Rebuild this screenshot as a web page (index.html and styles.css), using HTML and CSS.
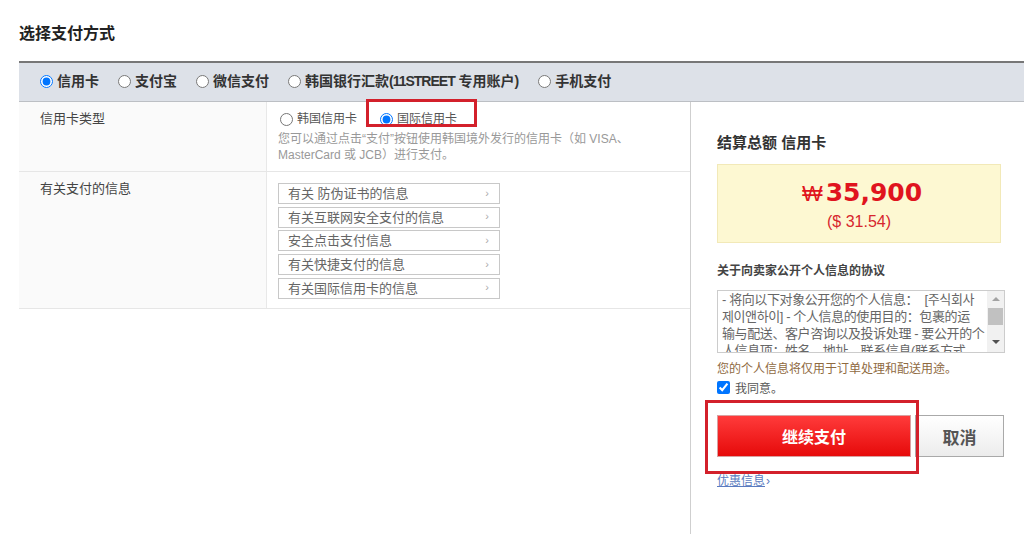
FILE: index.html
```html
<!DOCTYPE html>
<html lang="zh">
<head>
<meta charset="utf-8">
<title>选择支付方式</title>
<link rel="stylesheet" href="styles.css">
</head>
<body>
<div class="page">
  <h2 class="title">选择支付方式</h2>
  <div class="nav">
    <label class="nav-item"><input type="radio" name="pay" checked><span>信用卡</span></label>
    <label class="nav-item"><input type="radio" name="pay"><span>支付宝</span></label>
    <label class="nav-item"><input type="radio" name="pay"><span>微信支付</span></label>
    <label class="nav-item"><input type="radio" name="pay"><span>韩国银行汇款<span class="latin">(11STREET</span> 专用账户)</span></label>
    <label class="nav-item"><input type="radio" name="pay"><span>手机支付</span></label>
  </div>
  <div class="main">
    <div class="left">
      <div class="row row-type">
        <div class="label">信用卡类型</div>
        <div class="cell">
          <div class="opts">
            <label class="opt"><input type="radio" name="card"><span>韩国信用卡</span></label>
            <label class="opt opt-hl"><input type="radio" name="card" checked><span>国际信用卡</span><span class="hl-box"></span></label>
          </div>
          <p class="desc">您可以通过点击“支付”按钮使用韩国境外发行的信用卡（如 VISA、<br>MasterCard 或 JCB）进行支付。</p>
        </div>
      </div>
      <div class="row row-info">
        <div class="label">有关支付的信息</div>
        <div class="cell">
          <ul class="links">
            <li class="link"><span>有关 防伪证书的信息</span><span class="chev">›</span></li>
            <li class="link"><span>有关互联网安全支付的信息</span><span class="chev">›</span></li>
            <li class="link"><span>安全点击支付信息</span><span class="chev">›</span></li>
            <li class="link"><span>有关快捷支付的信息</span><span class="chev">›</span></li>
            <li class="link"><span>有关国际信用卡的信息</span><span class="chev">›</span></li>
          </ul>
        </div>
      </div>
    </div>
    <div class="right">
      <div class="panel">
        <h3 class="sum-title">结算总额 信用卡</h3>
        <div class="price-box">
          <div class="price"><span class="won">₩</span>35,900</div>
          <div class="usd">($ 31.54)</div>
        </div>
        <h4 class="agree-title">关于向卖家公开个人信息的协议</h4>
        <div class="terms">
          <div class="terms-text">
            <span class="tl">- 将向以下对象公开您的个人信息：&nbsp; [주식회사</span>
            <span class="tl">제이앤하이] - 个人信息的使用目的：包裹的运</span>
            <span class="tl">输与配送、客户咨询以及投诉处理 - 要公开的个</span>
            <span class="tl">人信息项：姓名、地址、联系信息(联系方式、</span>
          </div>
          <div class="sbar">
            <span class="arr up"></span>
            <span class="thumb"></span>
            <span class="arr down"></span>
          </div>
        </div>
        <p class="notice">您的个人信息将仅用于订单处理和配送用途。</p>
        <label class="agree"><input type="checkbox" checked><span>我同意。</span></label>
        <div class="btns">
          <button class="btn-pay" type="button">继续支付</button>
          <button class="btn-cancel" type="button">取消</button>
          <span class="btn-hl"></span>
        </div>
        <a class="promo" href="#">优惠信息<span class="promo-chev">›</span></a>
      </div>
    </div>
  </div>
</div>
</body>
</html>
```
FILE: styles.css
```css
* { box-sizing: border-box; }
html, body { margin: 0; padding: 0; background: #fff; }
body {
  font-family: "Liberation Sans", "Noto Sans CJK SC", "Noto Sans CJK KR", sans-serif;
  color: #333;
  width: 1024px;
  height: 534px;
  overflow: hidden;
}
.page { padding-left: 19px; }
.title {
  margin: 0;
  padding-top: 23px;
  height: 61px;
  font-size: 16px;
  line-height: 22px;
  font-weight: bold;
  color: #222;
}
.nav {
  display: flex;
  align-items: center;
  gap: 19px;
  height: 41px;
  padding-left: 21px;
  padding-bottom: 2px;
  background: #dde1e8;
  border-top: 2px solid #777;
  border-bottom: 1px solid #bcbfc4;
}
.nav-item {
  display: flex;
  align-items: center;
  gap: 4px;
  font-size: 14px;
  font-weight: bold;
  color: #333;
  line-height: 20px;
}
.latin { letter-spacing: -1px; }
input[type="radio"], input[type="checkbox"] {
  margin: 0;
  width: 13px;
  height: 13px;
}
.main {
  display: flex;
  height: 432px;
}
.left {
  width: 672px;
  border-right: 1px solid #cfcfcf;
}
.row {
  display: flex;
  border-bottom: 1px solid #e6e6e6;
}
.row-type { height: 70px; }
.row-info { height: 137px; }
.label {
  width: 248px;
  background: #fafafa;
  padding: 9px 21px;
  font-size: 13px;
  line-height: 16px;
  color: #444;
  border-right: 1px solid #e8e8e8;
}
.cell {
  flex: 1;
  padding: 9px 0 0 11px;
  background: #fff;
}
.opts {
  display: flex;
  align-items: center;
  gap: 23px;
  height: 16px;
  padding-left: 2px;
}
.opt {
  display: flex;
  align-items: center;
  gap: 4px;
  font-size: 12px;
  line-height: 16px;
  color: #555;
}
.opt-hl { position: relative; }
.hl-box {
  position: absolute;
  left: -14px;
  top: -12px;
  width: 111px;
  height: 28px;
  border: 3px solid #d3202b;
}
.desc {
  margin: 4px 0 0;
  font-size: 12px;
  line-height: 16px;
  color: #999;
}
.links {
  list-style: none;
  margin: 0;
  padding: 2px 0 0;
  display: flex;
  flex-direction: column;
  gap: 2.7px;
}
.link {
  width: 222px;
  height: 21px;
  border: 1px solid #c8c8c8;
  display: flex;
  align-items: center;
  justify-content: space-between;
  padding: 0 10px 2px 9px;
  font-size: 13px;
  color: #666;
  background: #fff;
}
.chev { font-size: 11px; color: #aaa; }
.right { flex: 1; }
.panel {
  width: 288px;
  margin-left: 26px;
  padding-top: 31px;
}
.sum-title {
  margin: 0;
  font-size: 15px;
  line-height: 20px;
  font-weight: bold;
  color: #333;
}
.price-box {
  margin-top: 11px;
  width: 284px;
  height: 79px;
  background: #fdf8d2;
  border: 1px solid #f2e9b8;
  padding-top: 11px;
  text-align: center;
  color: #e0141e;
}
.price {
  font-family: "DejaVu Sans", "Liberation Sans", sans-serif;
  font-size: 25px;
  line-height: 34px;
  font-weight: bold;
  padding-left: 6px;
}
.won {
  font-family: "Liberation Sans", sans-serif;
  font-weight: normal;
  font-size: 22px;
  margin-right: 3px;
}
.usd {
  font-size: 16px;
  line-height: 22px;
  color: #d7262e;
}
.agree-title {
  margin: 19px 0 0;
  font-size: 12px;
  line-height: 18px;
  font-weight: bold;
  color: #444;
}
.terms {
  margin-top: 10px;
  height: 63px;
  border: 1px solid #ccc;
  display: flex;
  overflow: hidden;
}
.terms-text {
  flex: 1;
  padding: 0 0 0 4px;
  font-size: 13px;
  letter-spacing: -0.4px;
  line-height: 17px;
  color: #666;
  overflow: hidden;
}
.tl { display: block; white-space: nowrap; }
.sbar {
  width: 17px;
  background: #f1f1f1;
  display: flex;
  flex-direction: column;
  align-items: center;
}
.arr {
  width: 0;
  height: 0;
  border-left: 4px solid transparent;
  border-right: 4px solid transparent;
}
.arr.up { border-bottom: 4px solid #a3a3a3; margin-top: 6px; }
.thumb {
  width: 15px;
  height: 17px;
  background: #c1c1c1;
  margin-top: 7px;
}
.arr.down { border-top: 4px solid #505050; margin-top: 15px; }
.notice {
  margin: 7px 0 0;
  font-size: 12px;
  line-height: 18px;
  color: #8f6a3f;
}
.agree {
  display: flex;
  align-items: center;
  gap: 5px;
  height: 18px;
  font-size: 12px;
  color: #555;
}
.btns {
  position: relative;
  display: flex;
  gap: 4px;
  margin-top: 19px;
  height: 42px;
}
.btn-pay {
  width: 194px;
  height: 42px;
  border: 1px solid #d9a0a0;
  background: linear-gradient(#ff3b3b, #e60a0a);
  color: #fff;
  font-family: inherit;
  font-size: 16px;
  font-weight: bold;
  padding: 0;
}
.btn-cancel {
  width: 89px;
  height: 42px;
  border: 1px solid #a9a9a9;
  background: linear-gradient(#ffffff, #ececec);
  color: #555;
  font-family: inherit;
  font-size: 17px;
  font-weight: bold;
  padding: 0;
}
.btn-hl {
  position: absolute;
  left: -12px;
  top: -15px;
  width: 214px;
  height: 74px;
  border: 3px solid #d3202b;
}
.promo {
  display: inline-block;
  margin-top: 15px;
  font-size: 12px;
  line-height: 18px;
  color: #5a7bc0;
  text-decoration: underline;
}
.promo-chev { text-decoration: none; display: inline-block; margin-left: 1px; }
```
